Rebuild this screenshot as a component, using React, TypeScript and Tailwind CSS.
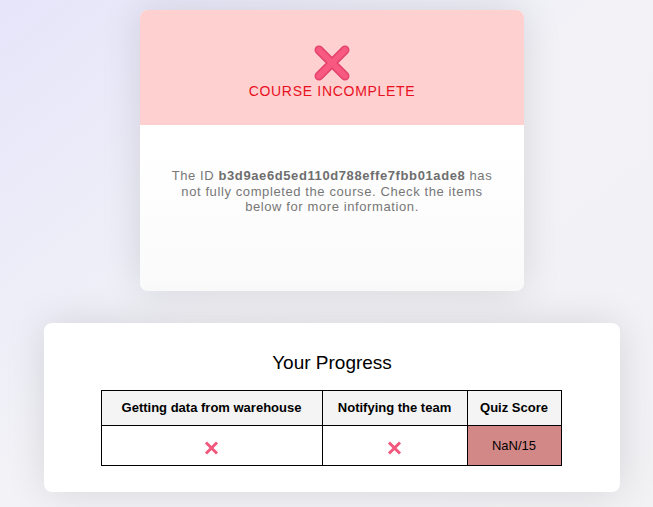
import React from 'react';

const BigCross: React.FC = () => (
  <svg width="40" height="40" viewBox="0 0 40 40" className="block">
    <path d="M7 7 L33 33 M33 7 L7 33" stroke="#e4436c" strokeWidth="9" strokeLinecap="round" />
    <path d="M7 7 L33 33 M33 7 L7 33" stroke="#f8597f" strokeWidth="6" strokeLinecap="round" />
  </svg>
);

const SmallCross: React.FC = () => (
  <svg width="15" height="14" viewBox="0 0 15 14" className="inline-block">
    <path d="M2 1.5 L13 12.5 M13 1.5 L2 12.5" stroke="#f2587e" strokeWidth="3" />
  </svg>
);

const steps = ['Getting data from warehouse', 'Notifying the team'];

const App: React.FC = () => {
  return (
    <div className="min-h-[507px] w-full bg-gradient-to-br from-[#e6e5fa] via-[#f3f3f7] to-[#f2f1f4] font-['Liberation_Sans',Arial,sans-serif] pl-[11px] pt-[10px] pb-[15px] flex flex-col items-center">
      <div className="w-[384px] h-[281px] rounded-lg overflow-hidden bg-gradient-to-b from-white via-white to-[#fafafb] shadow-[0_0_40px_rgba(0,0,0,0.12)] flex flex-col">
        <div className="h-[115px] bg-[#ffd0d0] flex flex-col items-center pt-[33px]">
          <BigCross />
          <div className="text-[14px] leading-[16px] tracking-[0.05em] text-[#e8101e]">COURSE INCOMPLETE</div>
        </div>
        <div className="px-[28px] pt-[43px] text-center text-[13px] leading-[15.6px] text-[#777777] tracking-[0.6px]">
          The ID <b className="font-bold text-[#6e6e6e]">b3d9ae6d5ed110d788effe7fbb01ade8</b> has not fully completed the course. Check the items below for more information.
        </div>
      </div>

      <div className="mt-[32px] w-[576px] h-[169px] rounded-lg bg-white shadow-[0_0_40px_rgba(0,0,0,0.12)] flex flex-col items-center pt-[28px]">
        <h2 className="text-[19px] leading-[24px] text-black">Your Progress</h2>
        <table className="mt-[15px] w-[461px] -translate-x-[1px] border-collapse text-[13px] text-black">
          <thead>
            <tr className="h-[35px] bg-[#f4f4f4]">
              {steps.map((s) => (
                <th key={s} className="border border-black font-bold px-2 first:w-[221px] [&:nth-child(2)]:w-[145px]">{s}</th>
              ))}
              <th className="border border-black font-bold px-2">Quiz Score</th>
            </tr>
          </thead>
          <tbody>
            <tr className="h-[40px]">
              {steps.map((s) => (
                <td key={s} className="border border-black text-center pt-[4px]">
                  <SmallCross />
                </td>
              ))}
              <td className="border border-black text-center bg-[#d38888]">NaN/15</td>
            </tr>
          </tbody>
        </table>
      </div>
    </div>
  );
};

export default App;
